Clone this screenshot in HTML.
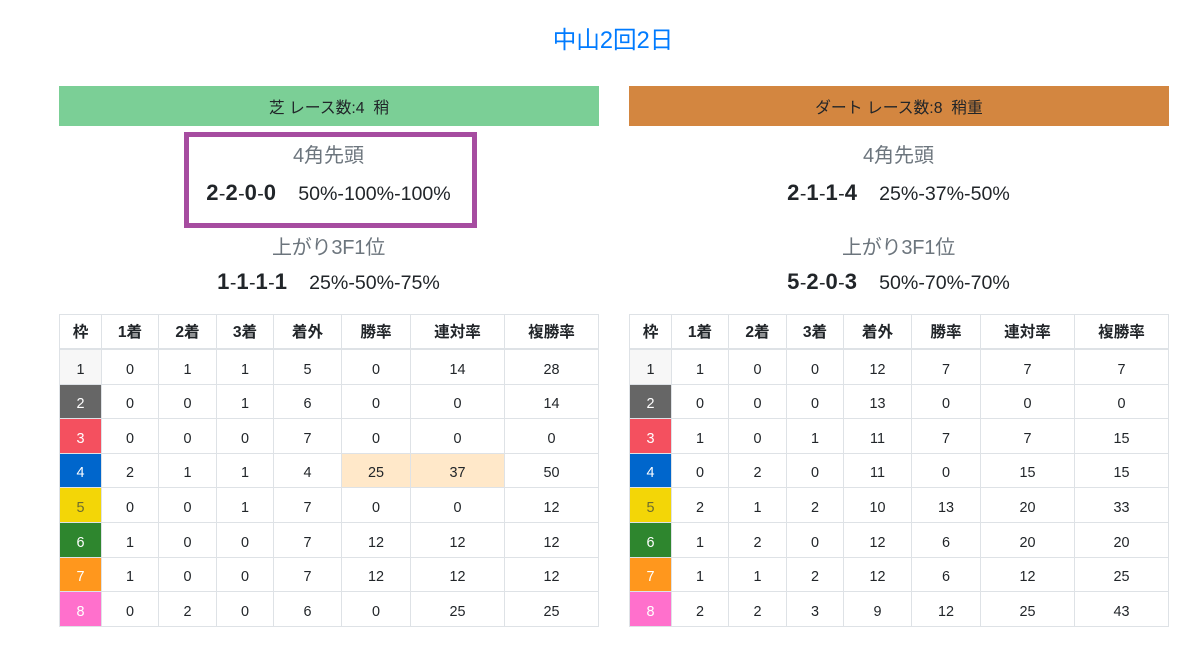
<!DOCTYPE html>
<html lang="ja">
<head>
<meta charset="utf-8">
<title>中山2回2日</title>
<style>
html,body{margin:0;padding:0;background:#fff}
body{width:1192px;height:649px;position:relative;overflow:hidden;color:#212529;font-family:"Liberation Sans","Noto Sans CJK JP",sans-serif}
.title{position:absolute;left:58px;width:1110px;top:25px;line-height:32px;text-align:center;font-size:23.6px;color:#007bff}
.bar{position:absolute;top:86px;width:540px;height:40px;line-height:45px;text-align:center;font-size:15.8px;white-space:pre}
.lab,.st{position:absolute;width:539px;text-align:center;white-space:pre}
.lab{font-size:20px;line-height:28px;color:#6c757d}
.lab.u{letter-spacing:-.2px}
.st{font-size:19.6px;line-height:28px}
.st b{font-size:22px;letter-spacing:.4px;line-height:0}
table{position:absolute;top:314px;width:539px;border-collapse:collapse;table-layout:fixed;font-size:14.4px}
td,th{border:1px solid #dee2e6;padding:0;text-align:center;vertical-align:middle;line-height:18px}
th{height:31px;padding-top:2px;border-bottom:2px solid #dee2e6;font-weight:700;font-size:15.6px}
td{height:28.1px;padding-top:5.5px}
.box{position:absolute;left:184px;top:132px;width:283px;height:86px;border:5px solid #a64ca0}
.w1{background:#f7f7f7}
.w2{background:#666;color:#fff}
.w3{background:#f4505f;color:#fff}
.w4{background:#0066cc;color:#fff}
.w5{background:#f3d607;color:#6c6c30}
.w6{background:#2e862e;color:#fff}
.w7{background:#ff971d;color:#fff}
.w8{background:#ff70cc;color:#fff}
.h{background:#ffe8c9}
</style>
</head>
<body>
<div class="title">中山2回2日</div>

<div class="bar" style="left:59px;background:#7bcf96">芝 レース数:4  稍</div>
<div class="bar" style="left:629px;background:#d38640">ダート レース数:8  稍重</div>

<div class="box"></div>

<div class="lab" style="left:59px;top:142px">4角先頭</div>
<div class="st" style="left:59px;top:180px"><b>2</b>-<b>2</b>-<b>0</b>-<b>0</b>    50%-100%-100%</div>
<div class="lab u" style="left:59px;top:234px">上がり3F1位</div>
<div class="st" style="left:59px;top:269px"><b>1</b>-<b>1</b>-<b>1</b>-<b>1</b>    25%-50%-75%</div>

<div class="lab" style="left:629px;top:142px">4角先頭</div>
<div class="st" style="left:629px;top:180px"><b>2</b>-<b>1</b>-<b>1</b>-<b>4</b>    25%-37%-50%</div>
<div class="lab u" style="left:629px;top:234px">上がり3F1位</div>
<div class="st" style="left:629px;top:269px"><b>5</b>-<b>2</b>-<b>0</b>-<b>3</b>    50%-70%-70%</div>

<table style="left:59px">
<colgroup><col style="width:42px"><col style="width:57px"><col style="width:58px"><col style="width:57px"><col style="width:68px"><col style="width:69px"><col style="width:94px"><col style="width:94px"></colgroup>
<tr><th>枠</th><th>1着</th><th>2着</th><th>3着</th><th>着外</th><th>勝率</th><th>連対率</th><th>複勝率</th></tr>
<tr><td class="w1">1</td><td>0</td><td>1</td><td>1</td><td>5</td><td>0</td><td>14</td><td>28</td></tr>
<tr><td class="w2">2</td><td>0</td><td>0</td><td>1</td><td>6</td><td>0</td><td>0</td><td>14</td></tr>
<tr><td class="w3">3</td><td>0</td><td>0</td><td>0</td><td>7</td><td>0</td><td>0</td><td>0</td></tr>
<tr><td class="w4">4</td><td>2</td><td>1</td><td>1</td><td>4</td><td class="h">25</td><td class="h">37</td><td>50</td></tr>
<tr><td class="w5">5</td><td>0</td><td>0</td><td>1</td><td>7</td><td>0</td><td>0</td><td>12</td></tr>
<tr><td class="w6">6</td><td>1</td><td>0</td><td>0</td><td>7</td><td>12</td><td>12</td><td>12</td></tr>
<tr><td class="w7">7</td><td>1</td><td>0</td><td>0</td><td>7</td><td>12</td><td>12</td><td>12</td></tr>
<tr><td class="w8">8</td><td>0</td><td>2</td><td>0</td><td>6</td><td>0</td><td>25</td><td>25</td></tr>
</table>

<table style="left:629px">
<colgroup><col style="width:42px"><col style="width:57px"><col style="width:58px"><col style="width:57px"><col style="width:68px"><col style="width:69px"><col style="width:94px"><col style="width:94px"></colgroup>
<tr><th>枠</th><th>1着</th><th>2着</th><th>3着</th><th>着外</th><th>勝率</th><th>連対率</th><th>複勝率</th></tr>
<tr><td class="w1">1</td><td>1</td><td>0</td><td>0</td><td>12</td><td>7</td><td>7</td><td>7</td></tr>
<tr><td class="w2">2</td><td>0</td><td>0</td><td>0</td><td>13</td><td>0</td><td>0</td><td>0</td></tr>
<tr><td class="w3">3</td><td>1</td><td>0</td><td>1</td><td>11</td><td>7</td><td>7</td><td>15</td></tr>
<tr><td class="w4">4</td><td>0</td><td>2</td><td>0</td><td>11</td><td>0</td><td>15</td><td>15</td></tr>
<tr><td class="w5">5</td><td>2</td><td>1</td><td>2</td><td>10</td><td>13</td><td>20</td><td>33</td></tr>
<tr><td class="w6">6</td><td>1</td><td>2</td><td>0</td><td>12</td><td>6</td><td>20</td><td>20</td></tr>
<tr><td class="w7">7</td><td>1</td><td>1</td><td>2</td><td>12</td><td>6</td><td>12</td><td>25</td></tr>
<tr><td class="w8">8</td><td>2</td><td>2</td><td>3</td><td>9</td><td>12</td><td>25</td><td>43</td></tr>
</table>
</body>
</html>
